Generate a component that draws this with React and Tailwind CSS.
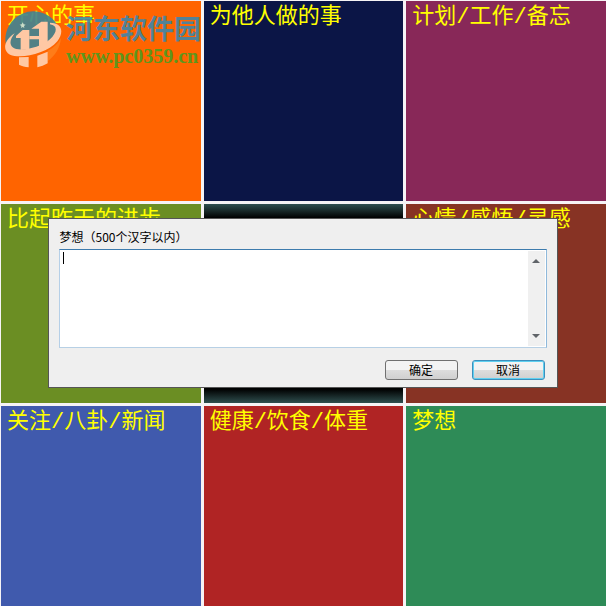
import React from 'react';

const tiles = [
    { title: '开心的事', color: 'bg-[#ff6400]' },
    { title: '为他人做的事', color: 'bg-[#0b1546]' },
    { title: '计划/工作/备忘', color: 'bg-[#882858]' },
    { title: '比起昨天的进步', color: 'bg-[#6b8e23]' },
    { title: '', color: 'bg-[linear-gradient(#2f4f4f,#000_7%,#000_93%,#2f4f4f)]' },
    { title: '心情/感悟/灵感', color: 'bg-[#873324]' },
    { title: '关注/八卦/新闻', color: 'bg-[#405aad]' },
    { title: '健康/饮食/体重', color: 'bg-[#b02424]' },
    { title: '梦想', color: 'bg-[#2e8b57]' },
];

const Tile = ({ title, color }) => (
    <section className={`aspect-square px-1.5 pt-0.5 ${color}`}>
        {title && (
            <h2 className="font-['Liberation_Mono','Noto_Sans_CJK_SC',sans-serif] text-[22px] leading-[30px] whitespace-nowrap text-[#ffff00]">
                {title}
            </h2>
        )}
    </section>
);

const Logo = () => (
    <svg className="h-[58px] w-[58px] shrink-0" viewBox="12 28 174 174" aria-hidden="true">
        {/* Globe */}
        <path d="M17 128A84 84 0 0 1 166 64C176 82 168 102 148 120C118 146 55 156 36 142C28 136 24 130 17 128Z" fill="#3f8393" fillOpacity="0.9" />
        <path d="M143 150C160 142 174 130 183 112C180 142 166 164 143 182Z" fill="#ff7c18" />
        {/* Ring */}
        <path d="M44 98C12 118 6 150 30 162C62 176 140 160 172 122C192 96 188 66 150 66L150 71C174 75 172 95 150 116C120 143 55 155 38 140C26 129 32 114 44 98Z" fill="#ffc8a4" />
        {/* Pillars */}
        <path d="M48 106L68 88H88V146L62 148V112H48Z" fill="#ffc8a4" />
        <path d="M94 84L124 63H143V126L117 138V84ZM88 106H117V116H88Z" fill="#ffc8a4" />
        <path d="M57 170L86 169V200C75 199 66 197 57 192ZM112 165L143 153V188C133 194 123 198 112 200Z" fill="#ffc8a4" />
        <path d="M68 65L71 71L77 72L72 76L73 82L68 79L63 82L64 76L59 72L65 71Z" fill="#c9dcc8" />
    </svg>
);

const Watermark = () => (
    <div className="absolute top-2.5 left-1 flex items-start gap-1 whitespace-nowrap">
        <Logo />
        <div>
            <p className="font-['Noto_Sans_CJK_SC',sans-serif] text-[27px] leading-9 font-bold text-[#3288b4]/85">河东软件园</p>
            <p className="font-['Liberation_Serif',serif] text-[20px] leading-5 font-bold text-[#5e961c]">www.pc0359.cn</p>
        </div>
    </div>
);

const ScrollButton = ({ label, down = false }) => (
    <button type="button" aria-label={label} className="flex h-5 w-full items-center justify-center">
        <svg className={`h-1 w-2 ${down ? 'rotate-180' : ''}`} viewBox="0 0 8 4" aria-hidden="true">
            <path d="M0 4L4 0L8 4Z" fill="#606469" />
        </svg>
    </button>
);

const buttonClasses = "h-5 w-[73px] rounded-[3px] border bg-linear-to-b from-[#f3f3f3] from-50% via-[#dddddd] via-50% to-[#d0d0d0] leading-none";

const Dialog = () => (
    <form className="w-[84%] border border-[#555] bg-[#efefef] px-2.5 pt-2 pb-[7px] text-xs text-black">
        <label htmlFor="dream" className="mb-0.5 block leading-5">梦想（500个汉字以内）</label>
        <div className="relative flex h-[99px] border border-t-[#3d7bad] border-r-[#8fb9db] border-b-[#b7d0e5] border-l-[#b5cfe7] bg-white">
            <textarea id="dream" className="min-w-0 flex-1 resize-none overflow-hidden px-1 outline-none" />
            <div className="my-px mr-px flex w-[17px] flex-col justify-between bg-[#f0f0f0]">
                <ScrollButton label="向上滚动" />
                <ScrollButton label="向下滚动" down />
            </div>
            {/* Text cursor */}
            <span className="absolute top-0.5 left-[3px] h-3 w-px bg-black" />
        </div>
        <div className="mt-3 flex justify-end gap-3.5 pr-0.5">
            <button type="submit" className={`${buttonClasses} border-[#707070]`}>确定</button>
            <button type="button" className={`${buttonClasses} border-[#3c8fbd] shadow-[inset_0_0_0_1px_#5fd0f0]`}>取消</button>
        </div>
    </form>
);

export default function App() {
    return (
        <main className="relative overflow-hidden bg-[#f6f3f5] font-['Noto_Sans_CJK_SC',sans-serif]">
            <div className="grid grid-cols-3 gap-[3px] pt-px pl-px">
                {tiles.map((tile, i) => <Tile key={i} {...tile} />)}
            </div>
            <Watermark />
            <div className="absolute inset-0 flex items-center justify-center">
                <Dialog />
            </div>
        </main>
    );
}
